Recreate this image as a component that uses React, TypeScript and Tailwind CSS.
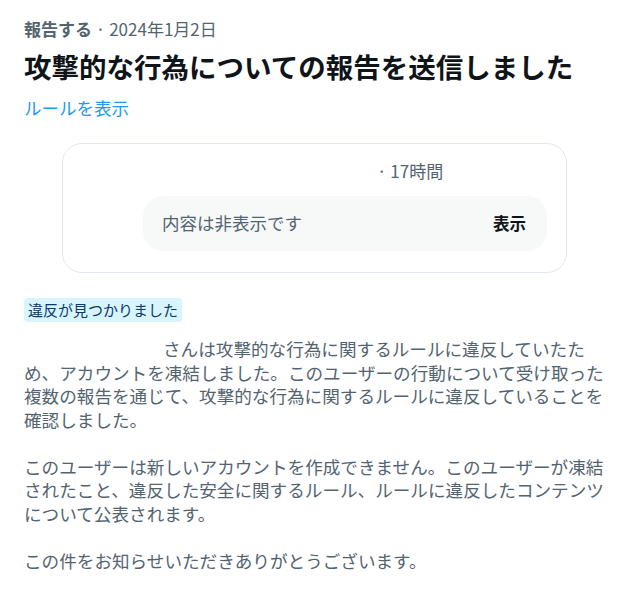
const jp = "font-['Segoe_UI','Noto_Sans_CJK_JP',sans-serif]";

function HiddenPostCard() {
  return (
    <div className="ml-[38px] mr-[41px] mt-[23px] h-[130px] rounded-[20px] border border-[#e1e8ed] pl-[80px] pr-[19px] pt-[16px]">
      <div className="flex h-[22px] items-center pl-[234px] text-[17px] leading-[22px] text-[#536471]">
        · 17時間
      </div>
      <div className="mt-[14px] flex h-[55px] items-center justify-between rounded-[20px] bg-[#f7f9f9] pl-[19px] pr-[21px]">
        <span className="text-[17.5px] text-[#536471]">内容は非表示です</span>
        <span className="text-[16.5px] font-bold text-[#0f1419]">表示</span>
      </div>
    </div>
  );
}

export default function App() {
  return (
    <div className={`${jp} min-h-[599px] w-[634px] bg-white pl-6 pr-[26px] pt-[18px]`}>
      <div className="text-[17px] leading-[22px] text-[#536471]">
        <span className="font-bold">報告する</span> · 2024年1月2日
      </div>
      <h1 className="mt-[8px] text-[27.5px] font-bold leading-[36px] text-[#0f1419]">
        攻撃的な行為についての報告を送信しました
      </h1>
      <div className="mt-[12px] text-[17.5px] leading-[24px] text-[#1d9bf0]">ルールを表示</div>

      <HiddenPostCard />

      <div className="mt-[25px] inline-block rounded-[4px] bg-[#d8f4fd] px-[4px] text-[15px] leading-[24px] text-[#0b3a6b]">
        違反が見つかりました
      </div>

      <div className="mt-[15px] text-[17.6px] leading-[23.5px] text-[#536471]">
        <p>
          <span className="inline-block w-[139px]" />
          さんは攻撃的な行為に関するルールに違反していたため、アカウントを凍結しました。このユーザーの行動について受け取った複数の報告を通じて、攻撃的な行為に関するルールに違反していることを確認しました。
        </p>
        <p className="mt-[23.5px]">
          このユーザーは新しいアカウントを作成できません。このユーザーが凍結されたこと、違反した安全に関するルール、ルールに違反したコンテンツについて公表されます。
        </p>
        <p className="mt-[23.5px]">この件をお知らせいただきありがとうございます。</p>
      </div>
    </div>
  );
}
